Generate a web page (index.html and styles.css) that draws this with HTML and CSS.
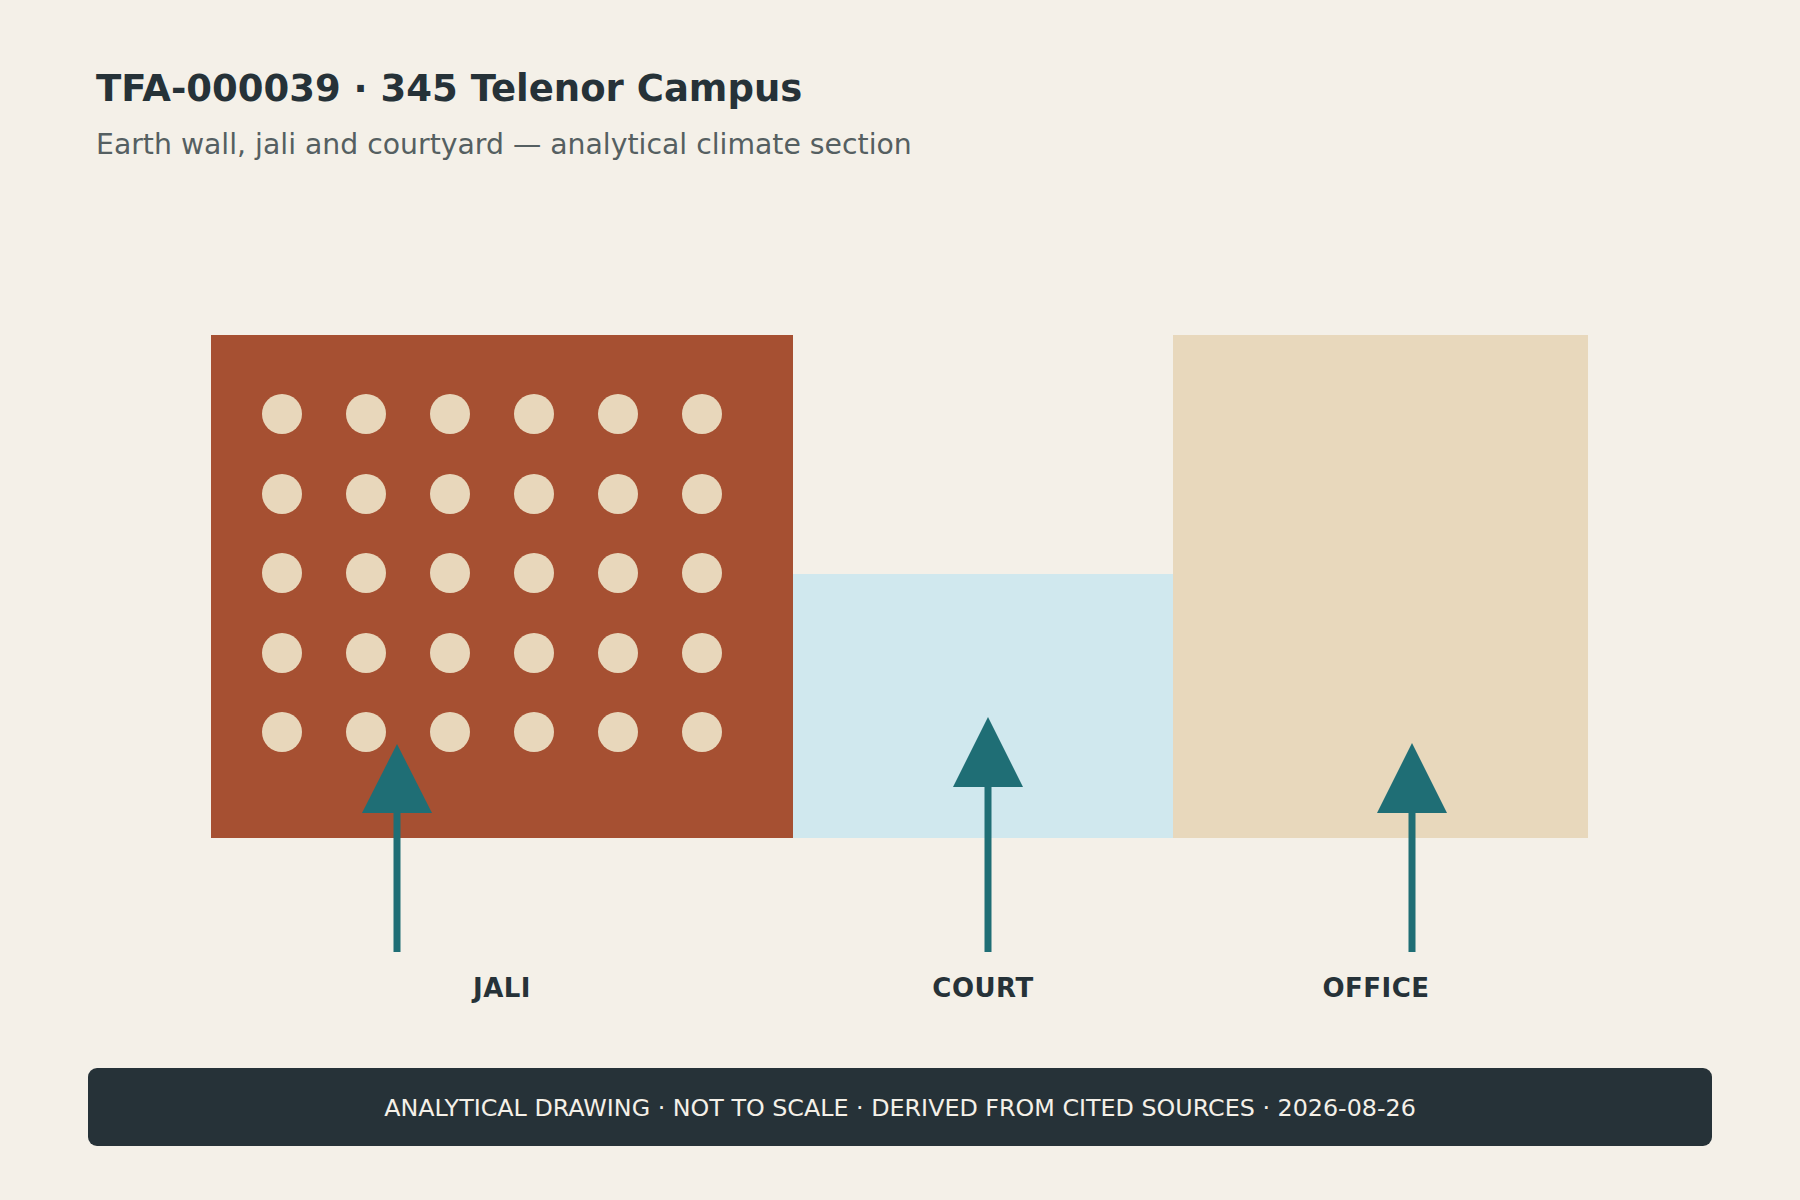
FILE: index.html
```html
<!DOCTYPE html>
<html lang="en">
<head>
<meta charset="utf-8">
<title>TFA-000039 · 345 Telenor Campus</title>
<link rel="stylesheet" href="styles.css">
</head>
<body>
<div class="page">
  <header class="head">
    <h1 class="title">TFA-000039 · 345 Telenor Campus</h1>
    <p class="subtitle">Earth wall, jali and courtyard — analytical climate section</p>
  </header>
  <svg class="section" width="1800" height="880" viewBox="0 160 1800 880" xmlns="http://www.w3.org/2000/svg">
    <rect class="wall" x="211" y="335" width="582" height="503"/>
    <g class="jali">
      <circle cx="282" cy="414" r="20"/><circle cx="366" cy="414" r="20"/><circle cx="450" cy="414" r="20"/><circle cx="534" cy="414" r="20"/><circle cx="618" cy="414" r="20"/><circle cx="702" cy="414" r="20"/>
      <circle cx="282" cy="494" r="20"/><circle cx="366" cy="494" r="20"/><circle cx="450" cy="494" r="20"/><circle cx="534" cy="494" r="20"/><circle cx="618" cy="494" r="20"/><circle cx="702" cy="494" r="20"/>
      <circle cx="282" cy="573" r="20"/><circle cx="366" cy="573" r="20"/><circle cx="450" cy="573" r="20"/><circle cx="534" cy="573" r="20"/><circle cx="618" cy="573" r="20"/><circle cx="702" cy="573" r="20"/>
      <circle cx="282" cy="653" r="20"/><circle cx="366" cy="653" r="20"/><circle cx="450" cy="653" r="20"/><circle cx="534" cy="653" r="20"/><circle cx="618" cy="653" r="20"/><circle cx="702" cy="653" r="20"/>
      <circle cx="282" cy="732" r="20"/><circle cx="366" cy="732" r="20"/><circle cx="450" cy="732" r="20"/><circle cx="534" cy="732" r="20"/><circle cx="618" cy="732" r="20"/><circle cx="702" cy="732" r="20"/>
    </g>
    <rect class="court" x="793" y="574" width="380" height="264"/>
    <rect class="office" x="1173" y="335" width="415" height="503"/>
    <g class="flow">
      <line x1="397" y1="812" x2="397" y2="952"/>
      <polygon points="397,744 362,813 432,813"/>
      <line x1="988" y1="786" x2="988" y2="952"/>
      <polygon points="988,717 953,787 1023,787"/>
      <line x1="1412" y1="812" x2="1412" y2="952"/>
      <polygon points="1412,743 1377,813 1447,813"/>
    </g>
    <g class="labels">
      <text x="502" y="997">JALI</text>
      <text x="983" y="997">COURT</text>
      <text x="1376" y="997">OFFICE</text>
    </g>
  </svg>
  <footer class="foot">ANALYTICAL DRAWING · NOT TO SCALE · DERIVED FROM CITED SOURCES · 2026-08-26</footer>
</div>
</body>
</html>
```

FILE: styles.css
```css
html, body {
  margin: 0;
  padding: 0;
  background: #F4F0E8;
}
body {
  font-family: "DejaVu Sans", "Liberation Sans", sans-serif;
  width: 1800px;
  height: 1200px;
  overflow: hidden;
}
.page {
  width: 1800px;
}
.head {
  box-sizing: border-box;
  height: 160px;
  padding: 67px 0 0 96px;
}
.title {
  margin: 0;
  font-size: 37px;
  line-height: 43px;
  font-weight: 700;
  color: #263238;
}
.subtitle {
  margin: 18px 0 0;
  font-size: 28.3px;
  line-height: 34px;
  color: #555F61;
}
.section {
  display: block;
}
.wall { fill: #A65032; }
.jali circle { fill: #E8D7BB; }
.court { fill: #D0E8EE; }
.office { fill: #E8D8BC; }
.flow line { stroke: #1F6E75; stroke-width: 7; }
.flow polygon { fill: #1F6E75; }
.labels text {
  font-family: "DejaVu Sans", sans-serif;
  font-weight: 700;
  font-size: 26px;
  fill: #263238;
  text-anchor: middle;
  letter-spacing: 0.5px;
}
.foot {
  box-sizing: border-box;
  margin: 28px 88px 0;
  height: 78px;
  border-radius: 9px;
  background: #263238;
  color: #F4F0E8;
  font-size: 23.8px;
  display: flex;
  align-items: center;
  justify-content: center;
  padding-top: 2px;
}
```
